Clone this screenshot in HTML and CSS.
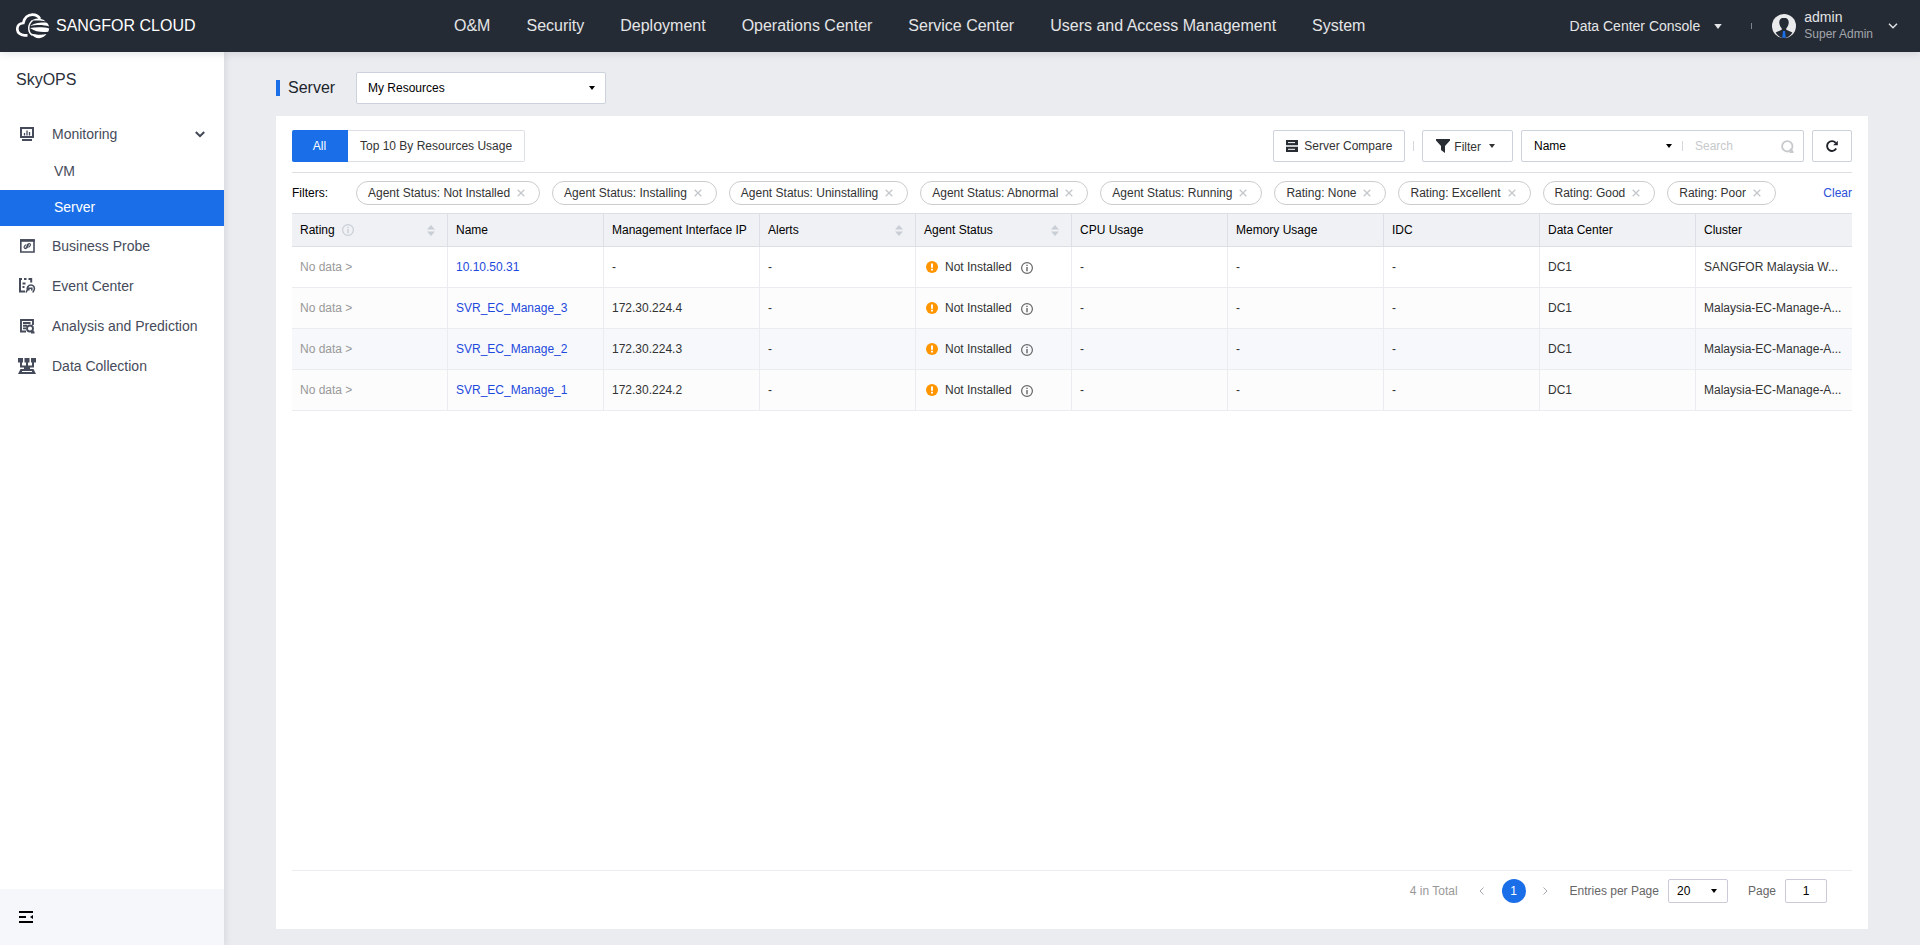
FILE: index.html
```
<!DOCTYPE html>
<html lang="en">
<head>
<meta charset="utf-8">
<title>Sangfor Cloud - Server</title>
<link rel="stylesheet" href="styles.css">
</head>
<body>
<svg class="defs" aria-hidden="true">
  <symbol id="i-info" viewBox="0 0 12 12"><circle cx="6" cy="6" r="5.400" fill="none" stroke="currentColor" stroke-width="1.200"/><path d="M5.300 5h1.400v4.200H5.300zM5.300 2.800h1.400v1.300H5.300z" fill="currentColor"/></symbol>
  <symbol id="i-warn" viewBox="0 0 12 12"><circle cx="6" cy="6" r="6" fill="#ff9500"/><path d="M5 2.500h2v4.300H5zM5 7.800h2v1.800H5z" fill="#fff"/></symbol>
  <symbol id="i-sort" viewBox="0 0 8 11"><path d="M4 0l4 4.500H0zM4 11L0 6.500h8z" fill="#c9ced6"/></symbol>
  <symbol id="i-x" viewBox="0 0 8 8"><path d="M.7.7l6.600 6.600M7.300.7L.7 7.300" stroke="#c4c7cb" stroke-width="1.300"/></symbol>
  <symbol id="i-caret" viewBox="0 0 6 4"><path d="M0 0h6L3 4z" fill="currentColor"/></symbol>
</svg>
<header class="topbar">
  <a class="brand" href="#">
    <svg width="34" height="26" viewBox="0 0 34 26" fill="none">
      <path d="M11.500 22.300H8.500C4.500 22.300 1.300 19.700 1.300 16c0-3.500 2.500-5.800 6-6C8.300 4.800 12 1.600 16.500 1.600c3.300 0 6 1.500 7.500 4.200" stroke="#fff" stroke-width="2.700"/>
      <path d="M15 8C18.500 4.700 25.500 4.600 29.500 8.400 25.500 7.400 19.500 7.300 15 8z" fill="#fff"/>
      <path d="M14.500 13c1.500-2.600 12-4.300 16.300-3.300 1.300.9 1.900 2.300 2.200 3.900-4-1.700-13-2-18.500-.6z" fill="#fff"/>
      <path d="M14 15c6-1 14-1 19.200.4-.2 1.300-.5 2.400-1 3.300-5.200 1-13.200.2-18.200-3.700z" fill="#fff"/>
      <path d="M14.800 20.200c4.500 1.600 10.700 1.900 15.700.9-3.700 5.500-11.700 5.700-15.700-.9z" fill="#fff"/>
      <path d="M16.500 7.500c-5 4-5 11.500 0 15" stroke="#fff" stroke-width="1.500"/>
    </svg>
    <span>SANGFOR CLOUD</span>
  </a>
  <nav class="topnav">
    <a href="#">O&amp;M</a><a href="#">Security</a><a href="#">Deployment</a><a href="#">Operations Center</a><a href="#">Service Center</a><a href="#">Users and Access Management</a><a href="#">System</a>
  </nav>
  <div class="account">
    <button class="console" type="button">Data Center Console <svg width="8" height="5"><use href="#i-caret"/></svg></button>
    <span class="tick"></span>
    <button class="user" type="button">
      <svg width="24" height="24" viewBox="0 0 24 24">
        <circle cx="12" cy="12" r="12" fill="#e9eaec"/>
        <path d="M12 3.700c-3.300 0-5 2.300-4.700 5.300.2 2.200 1.200 4.200 2.400 5.200v1.600L3.600 18.500C5.500 21.500 8.500 24 12 24s6.500-2.500 8.400-5.500l-6.100-2.700v-1.600c1.200-1 2.200-3 2.400-5.200.3-3-1.400-5.300-4.700-5.300z" fill="#252b35"/>
        <path d="M11 17h2l.8 6.800h-3.600z" fill="#1a6fe8"/>
      </svg>
      <span class="who"><span>admin</span><small>Super Admin</small></span>
      <svg width="10" height="6" viewBox="0 0 10 6"><path d="M1 .8l4 4 4-4" fill="none" stroke="#e4e5e7" stroke-width="1.400"/></svg>
    </button>
  </div>
</header>
<div class="body">
  <aside class="sidebar">
    <h2>SkyOPS</h2>
    <nav class="menu">
      <a href="#" class="item"><svg width="18" height="18" viewBox="0 0 18 18" fill="none" stroke="#454b5a"><path d="M3 3h12v9H3z" stroke-width="2"/><path d="M6.500 10.500V8M9 10.500V5.500M11.500 10.500V7" stroke-width="1.300"/><path d="M4 15h10" stroke-width="2"/></svg>Monitoring<svg class="chev" width="10" height="7" viewBox="0 0 10 7"><path d="M.8 1l4.200 4.200L9.200 1" fill="none" stroke="#3f4654" stroke-width="2"/></svg></a>
      <a href="#" class="sub">VM</a>
      <a href="#" class="sub active" aria-current="page">Server</a>
      <a href="#" class="item"><svg width="18" height="18" viewBox="0 0 18 18" fill="none" stroke="#454b5a"><path d="M2.800 3h13.200v12H2.800z" stroke-width="1.600"/><path d="M2 3.500h14.800" stroke-width="2.600"/><path d="M8.700 8.500l1.500-1.500c1.500-1.200 3 .5 1.800 1.800l-1.500 1.500M10 9.500l-1.500 1.500c-1.500 1.400-3.200-.3-2-1.800L8 7.700M7.800 10.700l3-3" stroke-width="1.200"/></svg>Business Probe</a>
      <a href="#" class="item"><svg width="18" height="18" viewBox="0 0 18 18" fill="none" stroke="#454b5a" stroke-width="2"><path d="M4 2H2v12.500h5M6 2h2.500M10.500 2h2.700v3.500M4.500 6.500h3M4.500 10h2"/><path d="M8 15.500l1.300-2.500c-.8-2 1-5 3.600-5 2.700 0 4.200 2.500 3.200 5l-1.300 2.500M10.800 13.500v-2.300h3v2.300" stroke-width="1.600"/></svg>Event Center</a>
      <a href="#" class="item"><svg width="18" height="18" viewBox="0 0 18 18" fill="none" stroke="#454b5a" stroke-width="1.900"><path d="M8 14.500H3V3h12v5M5 6h7.500M5 8.700h4M5 11.400h3" /><circle cx="12" cy="11.500" r="3"/><path d="M14 13.500l2 2.500M13 15.500h3.500"/></svg>Analysis and Prediction</a>
      <a href="#" class="item"><svg width="18" height="18" viewBox="0 0 18 18" fill="#454b5a"><path d="M0 1h5v4.500H0zM6.500 1h5v4.500h-5zM13 1h5v4.500h-5z"/><path d="M3 5v4.500h12V5M9 5v8" fill="none" stroke="#454b5a" stroke-width="2"/><path d="M6 9.500h6V13H6z"/><path d="M2.500 12h13l2.500 5H0z"/><path d="M4 14.500h10" stroke="#fff"/></svg>Data Collection</a>
    </nav>
    <div class="side-foot"><button type="button" aria-label="Collapse menu"><svg width="14" height="12" viewBox="0 0 14 12"><path d="M0 0h14v2H0zM0 5h7v2H0zM0 10h14v2H0zM11 6l3-2v4z" fill="#000"/></svg></button></div>
  </aside>
  <main class="main">
    <div class="page-head">
      <h1>Server</h1>
      <span class="picker scope"><select aria-label="Scope"><option>My Resources</option></select><svg width="6" height="4"><use href="#i-caret"/></svg></span>
    </div>
    <section class="card">
      <div class="toolbar">
        <div class="tabs"><button type="button" class="on">All</button><button type="button">Top 10 By Resources Usage</button></div>
        <div class="tools">
          <button type="button" class="btn compare"><svg width="12" height="12" viewBox="0 0 12 12"><path d="M0 0h12v5.300H0zM0 6.700h12V12H0z" fill="#282c33"/><path d="M2 2.600h7M2 9.300h7" stroke="#fff"/></svg>Server Compare</button>
          <span class="bar"></span>
          <button type="button" class="btn filter"><svg width="14" height="14" viewBox="0 0 14 14"><path d="M0 0h14v1.500L9 7v7l-4-3V7L0 1.500z" fill="#282c33"/></svg><span>Filter</span><svg width="6" height="4"><use href="#i-caret"/></svg></button>
          <div class="search">
            <span class="picker field"><select aria-label="Search field"><option>Name</option></select><svg width="6" height="4"><use href="#i-caret"/></svg></span>
            <span class="bar"></span>
            <input type="text" placeholder="Search" aria-label="Search">
            <svg width="13" height="13" viewBox="0 0 13 13" fill="none" stroke="#c7c9cc" stroke-width="1.800"><circle cx="6.300" cy="6.300" r="5.200"/><path d="M9 9l3 3M8.500 12.100h4"/></svg>
          </div>
          <button type="button" class="btn refresh" aria-label="Refresh"><svg width="12" height="12" viewBox="0 0 12 12"><path d="M10.200 8.600A4.900 4.900 0 1 1 9.700 2.800" fill="none" stroke="#1f2329" stroke-width="1.900"/><path d="M11.800.8v4.400H7.200z" fill="#1f2329"/></svg></button>
        </div>
      </div>
      <div class="filters">
        <span class="label">Filters:</span>
        <ul>
          <li>Agent Status: Not Installed<button type="button" aria-label="Remove"><svg width="8" height="8"><use href="#i-x"/></svg></button></li>
          <li>Agent Status: Installing<button type="button" aria-label="Remove"><svg width="8" height="8"><use href="#i-x"/></svg></button></li>
          <li>Agent Status: Uninstalling<button type="button" aria-label="Remove"><svg width="8" height="8"><use href="#i-x"/></svg></button></li>
          <li>Agent Status: Abnormal<button type="button" aria-label="Remove"><svg width="8" height="8"><use href="#i-x"/></svg></button></li>
          <li>Agent Status: Running<button type="button" aria-label="Remove"><svg width="8" height="8"><use href="#i-x"/></svg></button></li>
          <li>Rating: None<button type="button" aria-label="Remove"><svg width="8" height="8"><use href="#i-x"/></svg></button></li>
          <li>Rating: Excellent<button type="button" aria-label="Remove"><svg width="8" height="8"><use href="#i-x"/></svg></button></li>
          <li>Rating: Good<button type="button" aria-label="Remove"><svg width="8" height="8"><use href="#i-x"/></svg></button></li>
          <li>Rating: Poor<button type="button" aria-label="Remove"><svg width="8" height="8"><use href="#i-x"/></svg></button></li>
        </ul>
        <a href="#" class="clear">Clear</a>
      </div>
      <table class="grid">
        <thead><tr>
          <th><div class="th">Rating <svg class="hint" width="12" height="12"><use href="#i-info"/></svg><svg class="sort" width="8" height="11"><use href="#i-sort"/></svg></div></th>
          <th>Name</th><th>Management Interface IP</th>
          <th><div class="th">Alerts<svg class="sort" width="8" height="11"><use href="#i-sort"/></svg></div></th>
          <th><div class="th">Agent Status<svg class="sort" width="8" height="11"><use href="#i-sort"/></svg></div></th>
          <th>CPU Usage</th><th>Memory Usage</th><th>IDC</th><th>Data Center</th><th>Cluster</th>
        </tr></thead>
        <tbody>
          <tr><td class="none">No data &gt;</td><td><a href="#">10.10.50.31</a></td><td>-</td><td>-</td><td><div class="status"><svg width="12" height="12"><use href="#i-warn"/></svg>Not Installed<svg class="more" width="12" height="12"><use href="#i-info"/></svg></div></td><td>-</td><td>-</td><td>-</td><td>DC1</td><td>SANGFOR Malaysia W...</td></tr>
          <tr><td class="none">No data &gt;</td><td><a href="#">SVR_EC_Manage_3</a></td><td>172.30.224.4</td><td>-</td><td><div class="status"><svg width="12" height="12"><use href="#i-warn"/></svg>Not Installed<svg class="more" width="12" height="12"><use href="#i-info"/></svg></div></td><td>-</td><td>-</td><td>-</td><td>DC1</td><td>Malaysia-EC-Manage-A...</td></tr>
          <tr><td class="none">No data &gt;</td><td><a href="#">SVR_EC_Manage_2</a></td><td>172.30.224.3</td><td>-</td><td><div class="status"><svg width="12" height="12"><use href="#i-warn"/></svg>Not Installed<svg class="more" width="12" height="12"><use href="#i-info"/></svg></div></td><td>-</td><td>-</td><td>-</td><td>DC1</td><td>Malaysia-EC-Manage-A...</td></tr>
          <tr><td class="none">No data &gt;</td><td><a href="#">SVR_EC_Manage_1</a></td><td>172.30.224.2</td><td>-</td><td><div class="status"><svg width="12" height="12"><use href="#i-warn"/></svg>Not Installed<svg class="more" width="12" height="12"><use href="#i-info"/></svg></div></td><td>-</td><td>-</td><td>-</td><td>DC1</td><td>Malaysia-EC-Manage-A...</td></tr>
        </tbody>
      </table>
      <div class="pager">
        <span class="total">4 in Total</span>
        <button type="button" class="arrow" aria-label="Previous"><svg width="5" height="8" viewBox="0 0 5 8"><path d="M4.500.5L1 4l3.500 3.500" fill="none" stroke="#a4a7ac"/></svg></button>
        <button type="button" class="num">1</button>
        <button type="button" class="arrow" aria-label="Next"><svg width="5" height="8" viewBox="0 0 5 8"><path d="M.5.5L4 4 .5 7.500" fill="none" stroke="#a4a7ac"/></svg></button>
        <label for="per">Entries per Page</label>
        <span class="picker per"><select id="per"><option>20</option></select><svg width="6" height="4"><use href="#i-caret"/></svg></span>
        <label for="page" class="goto">Page</label>
        <input id="page" type="text" value="1">
      </div>
    </section>
  </main>
</div>
</body>
</html>
```
FILE: styles.css
```
* { box-sizing: border-box; }
body {
  margin: 0;
  min-height: 100vh;
  display: flex;
  flex-direction: column;
  background: #ebecf0;
  color: #333;
  font: 12px/16px "Liberation Sans", Arial, sans-serif;
}
button, input, select { font: inherit; color: inherit; margin: 0; padding: 0; border: 0; background: none; outline: 0; }
a { color: inherit; text-decoration: none; }
h1, h2 { margin: 0; font-weight: 400; font-size: 16px; line-height: 20px; }
svg { flex: none; display: block; }
.defs { position: absolute; width: 0; height: 0; }

.topbar {
  height: 52px;
  display: flex;
  align-items: center;
  background: #252b35;
  color: #e4e5e7;
  font-size: 16px;
  line-height: 20px;
  box-shadow: 0 2px 8px rgba(40, 50, 70, .12);
  z-index: 2;
}
.brand { display: flex; align-items: center; gap: 6px; padding-left: 16px; width: 454px; color: #fff; }
.topnav { display: flex; gap: 36px; white-space: nowrap; }
.account { margin-left: auto; display: flex; align-items: center; padding-right: 22px; font-size: 14px; }
.console { display: flex; align-items: center; gap: 14px; }
.tick { width: 1px; height: 6px; margin: 0 20px 0 29px; background: #80858d; }
.user { display: flex; align-items: center; gap: 8px; text-align: left; }
.who { display: flex; flex-direction: column; margin-right: 7px; line-height: 17px; }
.who small { font-size: 12px; color: #a3a6ab; }

.body { flex: 1; display: flex; }
.sidebar {
  width: 224px;
  flex: none;
  display: flex;
  flex-direction: column;
  background: #fff;
  box-shadow: 2px 0 6px rgba(40, 50, 70, .1);
}
.sidebar h2 { padding: 18px 16px 0; color: #2b303b; }
.menu { flex: 1; margin-top: 24px; color: #454b5a; font-size: 14px; line-height: 20px; }
.menu a { display: flex; align-items: center; }
.item { height: 40px; gap: 16px; padding: 0 19px 0 18px; }
.chev { margin-left: auto; }
.sub { height: 36px; padding: 0 0 2px 54px; }
.active { background: #1a6fe8; color: #fff; }
.side-foot { height: 56px; background: #f6f7fa; display: flex; align-items: center; padding-left: 19px; }

.main { flex: 1; min-width: 0; display: flex; flex-direction: column; padding: 20px 52px 16px; }
.page-head { display: flex; align-items: center; margin-bottom: 12px; }
.page-head h1 { display: flex; align-items: center; width: 80px; color: #20242c; }
.page-head h1::before { content: ""; width: 4px; height: 16px; margin-right: 8px; background: #1a6fe8; }
.picker { display: inline-flex; align-items: center; color: #000; }
.picker select { appearance: none; flex: 1; min-width: 0; height: 100%; }
.picker svg { pointer-events: none; }
.scope { width: 250px; height: 32px; padding: 0 10px 0 11px; border: 1px solid #ccd2db; border-radius: 2px; background: #fff; }

.card { flex: 1; display: flex; flex-direction: column; background: #fff; padding: 14px 16px 0; }
.toolbar { display: flex; justify-content: space-between; padding-bottom: 10px; border-bottom: 1px solid #dcdee2; }
.tabs { display: flex; }
.tabs button { height: 32px; padding: 0 12px; border: 1px solid #dcdfe6; border-left: 0; border-radius: 0 2px 2px 0; }
.tabs .on { width: 56px; padding: 0; background: #1a6fe8; border-color: #1a6fe8; color: #fff; border-radius: 2px 0 0 2px; }
.tools { display: flex; align-items: center; }
.btn { height: 32px; display: flex; align-items: center; border: 1px solid #ccd2db; border-radius: 2px; }
.compare { padding: 0 12px; gap: 6px; }
.bar { width: 1px; height: 10px; background: #d5d8dd; }
.tools > .bar { margin: 0 8px; }
.filter { padding: 0 17px 0 13px; gap: 4px; margin-right: 8px; }
.filter span { padding: 2px 4px 0 0; }
.search { width: 283px; height: 32px; display: flex; align-items: center; border: 1px solid #ccd2db; border-radius: 2px; padding: 0 9px 0 12px; margin-right: 8px; }
.field { width: 138px; height: 30px; }
.search .bar { margin: 0 12px 0 10px; }
.search input { flex: 1; min-width: 0; height: 30px; }
.search input::placeholder { color: #c7c9cc; opacity: 1; }
.refresh { width: 40px; justify-content: center; }

.filters { display: flex; align-items: center; padding: 8px 0; }
.label { width: 64px; color: #000; }
.filters ul { flex: 1; display: flex; gap: 12px; margin: 0; padding: 0; list-style: none; white-space: nowrap; }
.filters li { height: 24px; display: flex; align-items: center; gap: 7px; padding: 0 14px 0 11px; border: 1px solid #ccc; border-radius: 12px; }
.clear { color: #2a4fd8; }

.grid { width: 100%; table-layout: fixed; border-collapse: separate; border-spacing: 0; }
.grid th, .grid td { padding: 0 8px; text-align: left; font-weight: 400; white-space: nowrap; border-right: 1px solid #ebecef; border-bottom: 1px solid #ebecef; }
.grid th { height: 34px; background: #f0f1f5; color: #000; border-color: #dcdfe6; border-top: 1px solid #dcdfe6; }
.grid td { height: 41px; }
.grid th:last-child, .grid td:last-child { border-right: 0; }
.grid tr:nth-child(even) td { background: #fcfcfc; }
.grid tr:nth-child(3) td { background: #f6f8fb; }
.grid td a { color: #1d49dd; }
.grid .none { color: #999; }
.th { display: flex; align-items: center; }
.hint { margin-left: 7px; color: #c9ced6; }
.sort { margin-left: auto; margin-right: 4px; }
.status { display: flex; align-items: center; gap: 7px; padding-left: 2px; }
.more { margin-left: 2px; margin-top: 2px; color: #666; }

.pager { margin-top: auto; display: flex; align-items: center; justify-content: flex-end; padding: 8px 25px 26px 0; border-top: 1px solid #ebecf0; color: #666; }
.total { color: #999; margin-right: 16px; }
.arrow { width: 16px; height: 24px; display: flex; align-items: center; justify-content: center; }
.num { width: 24px; height: 24px; margin: 0 12px; border-radius: 50%; background: #1a6fe8; color: #fff; }
.pager label { margin: 0 9px 0 16px; }
.pager .goto { margin-left: 20px; }
.per { width: 60px; height: 24px; border: 1px solid #ccc9d9; border-radius: 2px; padding: 0 10px 0 8px; }
.pager input { width: 42px; height: 24px; border: 1px solid #ccc9d9; border-radius: 2px; text-align: center; color: #000; }
```
